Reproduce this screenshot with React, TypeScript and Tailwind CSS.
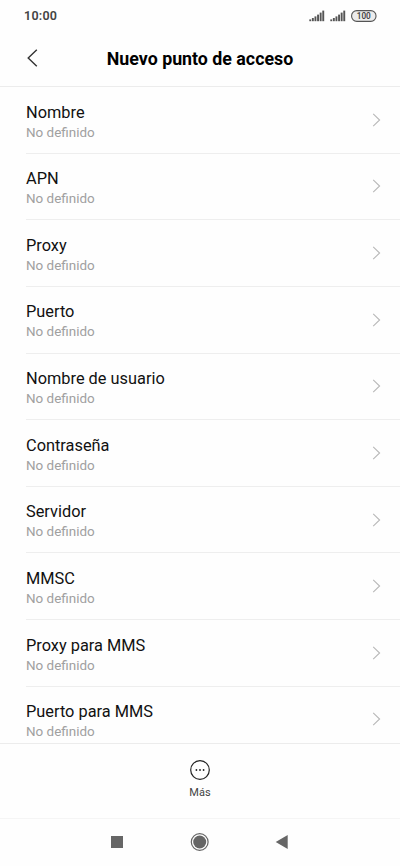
const fields = [
    "Nombre",
    "APN",
    "Proxy",
    "Puerto",
    "Nombre de usuario",
    "Contraseña",
    "Servidor",
    "MMSC",
    "Proxy para MMS",
    "Puerto para MMS",
];

function Signal() {
    return (
        <svg width="16" height="12" viewBox="0 0 16 12" fill="#555555">
            <rect x="0.3" y="9.4" width="1.9" height="1.8" />
            <rect x="2.9" y="8" width="1.9" height="3.2" />
            <rect x="5.5" y="6.4" width="1.9" height="4.8" />
            <rect x="8.1" y="4.6" width="1.9" height="6.6" />
            <rect x="10.7" y="2.6" width="1.9" height="8.6" />
            <rect x="13.3" y="0.6" width="1.9" height="10.6" />
        </svg>
    );
}

function StatusBar() {
    return (
        <div className="flex h-8 shrink-0 items-center justify-between pl-6 pr-[23px] text-[#444444]">
            <span className="text-[12.5px] font-semibold leading-4 tracking-[0.25px]">10:00</span>
            <div className="flex items-center">
                <Signal />
                <span className="w-[5px]" />
                <Signal />
                <svg className="ml-[5px]" width="26" height="12" viewBox="0 0 26 12">
                    <rect x="0.6" y="0.6" width="24.4" height="10.8" rx="5.2" fill="#ececec" stroke="#555555" strokeWidth="1.1" />
                    <text x="12.8" y="9" textAnchor="middle" fontSize="8.2" fontWeight="600" fill="#444444">
                        100
                    </text>
                </svg>
            </div>
        </div>
    );
}

function Header() {
    return (
        <header className="grid h-[55px] shrink-0 grid-cols-[80px_1fr_80px] items-center border-b border-[#ececec]">
            <button aria-label="Atrás" className="pb-[2px] pl-[27px]">
                <svg width="11" height="18" viewBox="0 0 11 18" fill="none" stroke="#333333" strokeWidth="1.4">
                    <path d="M9.8 0.7 1.2 9l8.6 8.3" />
                </svg>
            </button>
            <h1 className="whitespace-nowrap text-center text-[17.8px] font-bold leading-6 text-black">
                Nuevo punto de acceso
            </h1>
        </header>
    );
}

function FieldRow({ label }: { label: string }) {
    return (
        <li className="ml-[26px] flex h-[66.63px] shrink-0 items-center justify-between border-b border-[#eeeeee] pr-[19px]">
            <div className="pt-[3.4px]">
                <p className="text-[16.35px] leading-[21px] text-[#111111]">{label}</p>
                <p className="text-[13.45px] leading-[19px] text-[#a0a0a0]">No definido</p>
            </div>
            <svg width="9" height="14" viewBox="0 0 9 14" fill="none" stroke="#b8b8b8" strokeWidth="1.1">
                <path d="M1.2 0.8 7.6 7l-6.4 6.2" />
            </svg>
        </li>
    );
}

export default function App() {
    return (
        <div className="flex h-[866px] w-[400px] flex-col overflow-hidden bg-[#fefefe] font-[Roboto,sans-serif]">
            <StatusBar />
            <Header />
            <ul className="flex min-h-0 flex-1 flex-col overflow-hidden">
                {fields.map((label) => (
                    <FieldRow key={label} label={label} />
                ))}
            </ul>
            <div className="flex h-[75px] shrink-0 justify-center border-t border-[#ececec] pt-4">
                <button className="flex flex-col items-center self-start text-[#444444]">
                    <svg width="20" height="20" viewBox="0 0 20 20" fill="none">
                        <circle cx="10" cy="10" r="9.3" stroke="#222222" strokeWidth="1.2" />
                        <g fill="#222222">
                            <circle cx="6.4" cy="10" r="0.9" />
                            <circle cx="10" cy="10" r="0.9" />
                            <circle cx="13.6" cy="10" r="0.9" />
                        </g>
                    </svg>
                    <span className="mt-[5px] text-[11px] leading-4">Más</span>
                </button>
            </div>
            <nav className="flex h-12 shrink-0 items-center justify-center border-t border-[#f5f5f5] pb-px">
                <svg width="200" height="20" viewBox="0 0 200 20" fill="#666666">
                    <rect x="11" y="4" width="12" height="12" />
                    <circle cx="99.7" cy="10" r="8.4" fill="none" stroke="#666666" strokeWidth="1.2" />
                    <circle cx="99.7" cy="10" r="6.5" />
                    <path d="M175.7 10 187.7 3v14z" />
                </svg>
            </nav>
        </div>
    );
}
